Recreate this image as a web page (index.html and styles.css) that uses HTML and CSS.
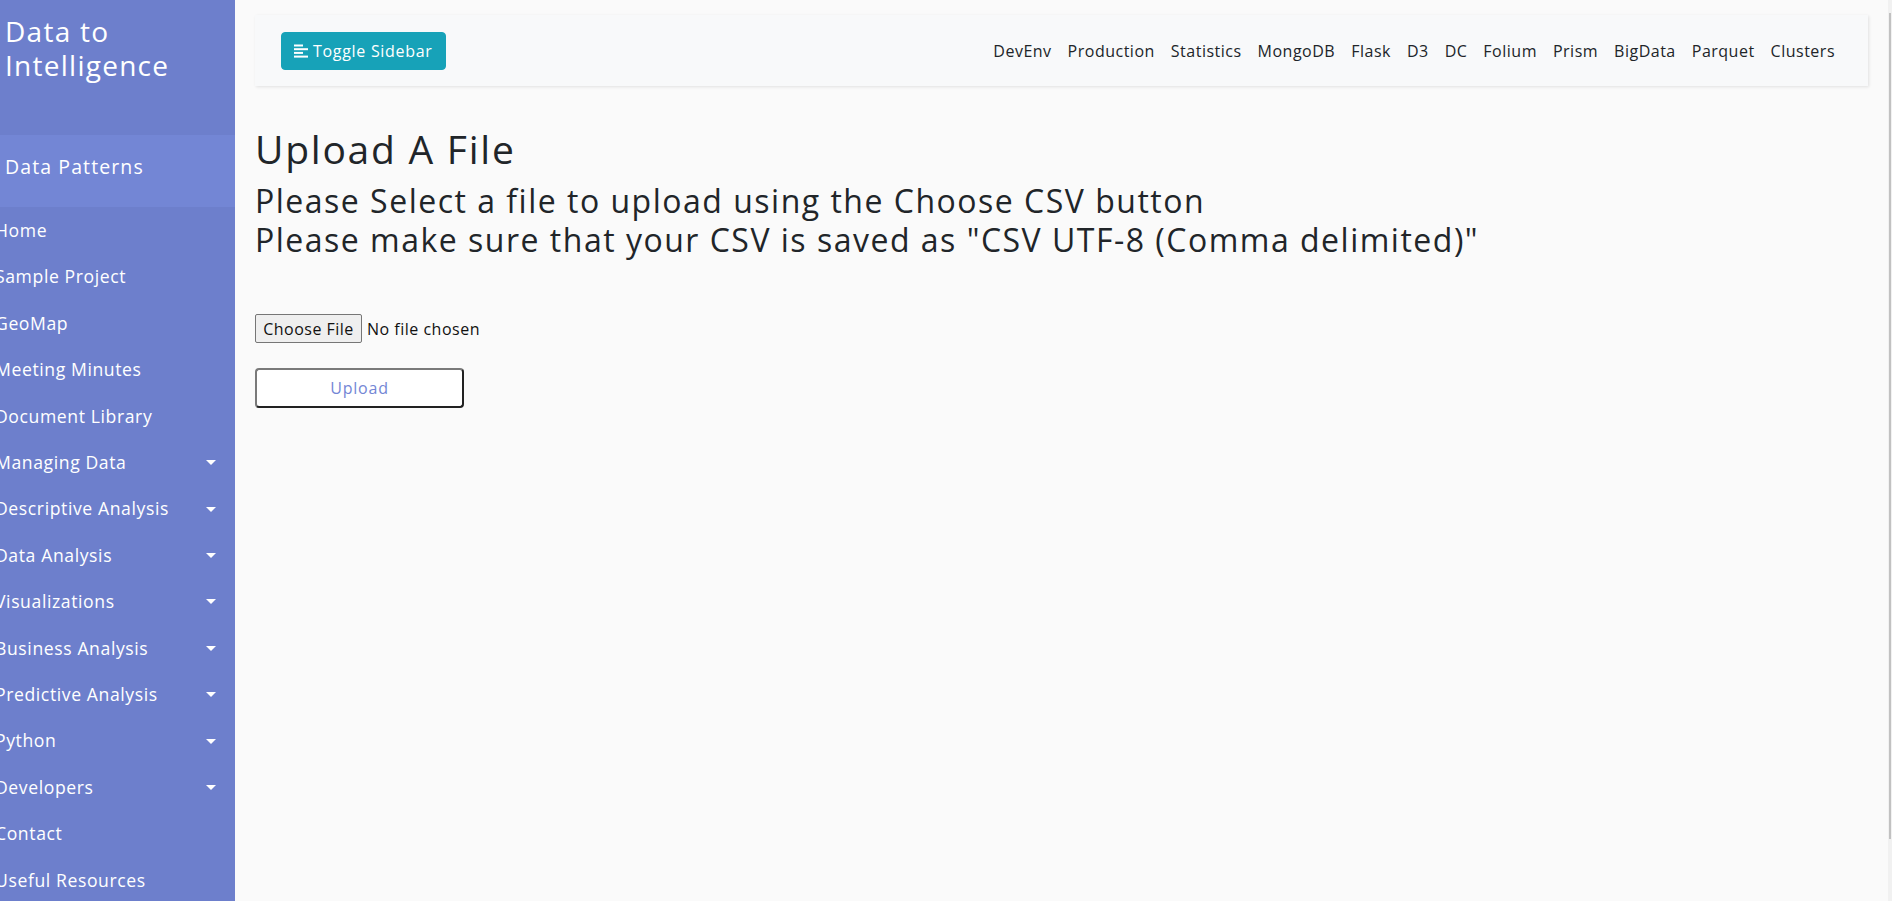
FILE: index.html
```html
<!DOCTYPE html>
<html lang="en">
<head>
<meta charset="utf-8">
<title>Upload A File - Data to Intelligence</title>
<link rel="stylesheet" href="styles.css">
</head>
<body>
<div class="wrapper">
  <nav class="sidebar">
    <div class="sidebar-inner">
      <div class="sidebar-header">
        <h3>Data to Intelligence</h3>
      </div>
      <p class="band">Data Patterns</p>
      <ul class="components">
        <li><a href="#">Home</a></li>
        <li><a href="#">Sample Project</a></li>
        <li><a href="#">GeoMap</a></li>
        <li><a href="#">Meeting Minutes</a></li>
        <li><a href="#">Document Library</a></li>
        <li><a href="#" class="dd">Managing Data</a></li>
        <li><a href="#" class="dd">Descriptive Analysis</a></li>
        <li><a href="#" class="dd">Data Analysis</a></li>
        <li><a href="#" class="dd">Visualizations</a></li>
        <li><a href="#" class="dd">Business Analysis</a></li>
        <li><a href="#" class="dd">Predictive Analysis</a></li>
        <li><a href="#" class="dd">Python</a></li>
        <li><a href="#" class="dd">Developers</a></li>
        <li><a href="#">Contact</a></li>
        <li><a href="#">Useful Resources</a></li>
      </ul>
    </div>
  </nav>

  <main class="content">
    <div class="topbar">
      <button class="toggle-btn" type="button">
        <svg class="toggle-icon" viewBox="0 0 14 14" width="14" height="14" aria-hidden="true">
          <rect x="0" y="0.5" width="9" height="2" fill="#fff"/>
          <rect x="0" y="4.2" width="14" height="2" fill="#fff"/>
          <rect x="0" y="7.9" width="9" height="2" fill="#fff"/>
          <rect x="0" y="11.6" width="14" height="2" fill="#fff"/>
        </svg>
        <span>Toggle Sidebar</span>
      </button>
      <ul class="toplinks">
        <li><a href="#">DevEnv</a></li>
        <li><a href="#">Production</a></li>
        <li><a href="#">Statistics</a></li>
        <li><a href="#">MongoDB</a></li>
        <li><a href="#">Flask</a></li>
        <li><a href="#">D3</a></li>
        <li><a href="#">DC</a></li>
        <li><a href="#">Folium</a></li>
        <li><a href="#">Prism</a></li>
        <li><a href="#">BigData</a></li>
        <li><a href="#">Parquet</a></li>
        <li><a href="#">Clusters</a></li>
      </ul>
    </div>

    <h1 class="title">Upload A File</h1>
    <h2 class="subtitle">Please Select a file to upload using the Choose CSV button<br>Please make sure that your CSV is saved as "CSV UTF-8 (Comma delimited)"</h2>

    <form class="upload-form">
      <div class="file-row">
        <label class="file-btn">Choose File<input type="file" class="file-input" accept=".csv"></label>
        <span class="file-name">No file chosen</span>
      </div>
      <button class="upload-btn" type="button">Upload</button>
    </form>
  </main>

  <div class="scrollbar"><div class="thumb"></div></div>
</div>
</body>
</html>
```

FILE: styles.css
```css
* { box-sizing: border-box; }

html, body {
  margin: 0;
  height: 100%;
}

body {
  font-family: "Open Sans", "Liberation Sans", sans-serif;
  background: #fafafa;
  color: #212529;
  overflow: hidden;
}

.wrapper {
  display: flex;
  height: 901px;
  overflow: hidden;
}

/* Sidebar */
.sidebar {
  flex: 0 0 235px;
  width: 235px;
  background: #6d7fcc;
  color: #fff;
  overflow: hidden;
}

.sidebar-inner {
  width: 250px;
  margin-left: -15px;
}

.sidebar-header {
  height: 135px;
  padding: 14px 20px 0 20px;
  background: #6d7fcc;
}

.sidebar-header h3 {
  margin: 0;
  font-size: 28px;
  line-height: 34px;
  font-weight: 500;
  letter-spacing: 0.045em;
}

.band {
  margin: 0;
  height: 72px;
  padding: 18px 20px 0 20px;
  background: #7386d5;
  font-size: 19.5px;
  line-height: 28px;
  font-weight: 500;
  letter-spacing: 1.1px;
}

.components {
  list-style: none;
  margin: 0;
  padding: 0;
}

.components li a {
  position: relative;
  display: block;
  padding: 10px;
  font-size: 17.6px;
  line-height: 26.4px;
  letter-spacing: 0.6px;
  color: #fff;
  text-decoration: none;
}

.components li a.dd::after {
  content: "";
  position: absolute;
  right: 19px;
  top: 50%;
  margin-top: -2px;
  border-top: 5px solid #fff;
  border-left: 5.5px solid transparent;
  border-right: 5.5px solid transparent;
}

/* Content */
.content {
  flex: 1 1 auto;
  min-width: 0;
  padding: 15px 20px 20px 20px;
}

.topbar {
  height: 71px;
  background: #f8f9fa;
  box-shadow: 1px 1px 3px rgba(0, 0, 0, 0.1);
  display: flex;
  align-items: center;
  justify-content: space-between;
  padding: 0 33px 0 26px;
  margin-bottom: 39px;
}

.toggle-btn {
  display: flex;
  align-items: center;
  gap: 5px;
  height: 38px;
  width: 165px;
  padding: 0 12px;
  background: #17a2b8;
  border: 1px solid #17a2b8;
  border-radius: 4px;
  color: #fff;
  font-family: inherit;
  font-size: 16px;
  letter-spacing: 0.7px;
  cursor: pointer;
}

.toggle-icon {
  flex: none;
  display: block;
}

.toplinks {
  list-style: none;
  margin: 0;
  padding: 0;
  display: flex;
  gap: 16px;
}

.toplinks a {
  color: #212529;
  text-decoration: none;
  font-size: 16px;
  letter-spacing: 0.5px;
}

.title {
  margin: 0 0 8px 0;
  font-size: 39px;
  line-height: 48px;
  font-weight: 500;
  letter-spacing: 0.045em;
}

.subtitle {
  margin: 0 0 55px 0;
  font-size: 32px;
  line-height: 39px;
  font-weight: 500;
  letter-spacing: 1.5px;
}

.upload-form {
  display: flex;
  flex-direction: column;
  align-items: flex-start;
  gap: 25px;
}

.file-row {
  display: flex;
  align-items: center;
  gap: 5px;
  height: 29px;
}

.file-btn {
  display: flex;
  align-items: center;
  justify-content: center;
  width: 107px;
  height: 29px;
  background: #efefef;
  border: 1px solid #767676;
  border-radius: 2px;
  font-size: 16px;
  letter-spacing: 0.5px;
  color: #111;
  cursor: pointer;
}

.file-input {
  display: none;
}

.file-name {
  font-size: 16px;
  letter-spacing: 0.5px;
  color: #111;
}

.upload-btn {
  width: 209px;
  height: 40px;
  background: #fff;
  border: 2px solid;
  border-color: #7a7a7a #222 #222 #7a7a7a;
  border-radius: 4px;
  color: #7386d5;
  font-family: inherit;
  font-size: 16px;
  letter-spacing: 0.8px;
  cursor: pointer;
}

/* Scrollbar strip */
.scrollbar {
  flex: 0 0 4px;
  background: #f1f1f1;
  padding: 13px 1px 0 1px;
}

.thumb {
  width: 2px;
  height: 826px;
  background: #c1c1c1;
}
```
